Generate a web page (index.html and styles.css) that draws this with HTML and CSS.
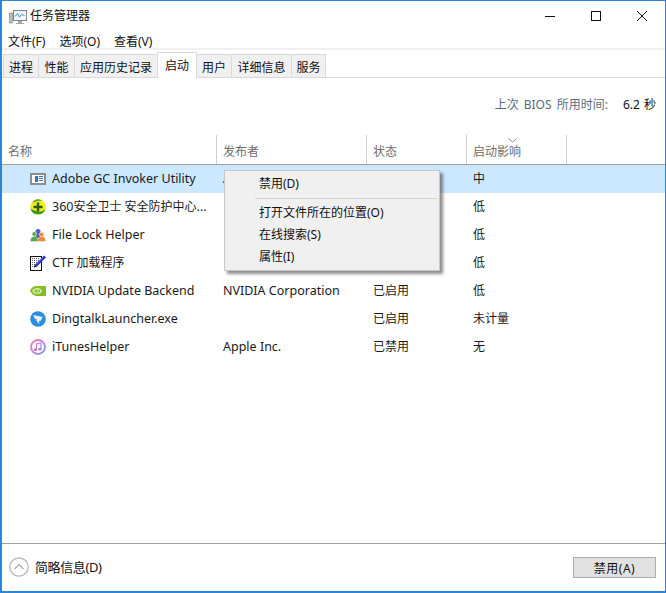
FILE: index.html
```html
<!DOCTYPE html>
<html lang="zh-CN">
<head>
<meta charset="utf-8">
<title>任务管理器</title>
<link rel="stylesheet" href="styles.css">
</head>
<body>
<div class="window">
  <header class="titlebar">
    <svg class="app-icon" width="18" height="16" viewBox="0 0 18 16">
      <rect x="0.5" y="4" width="3" height="10" fill="#b9bdbf" stroke="#7d8386" stroke-width=".6"/>
      <rect x="4.5" y="1.5" width="13" height="10" fill="#eef5fa" stroke="#7d8386"/>
      <path d="M6 7.500l2.500-3 2 3.500 2-2.500 3 1" fill="none" stroke="#3c8fc4"/>
      <path d="M9 12h4v2h2v1H7v-1h2z" fill="#a2a7aa"/>
    </svg>
    <span class="title">任务管理器</span>
    <div class="controls">
      <svg width="12" height="12" viewBox="0 0 12 12" class="ctl-min"><path d="M1 6.500h10" stroke="#111" fill="none"/></svg>
      <svg width="12" height="12" viewBox="0 0 12 12" class="ctl-max"><rect x="1.500" y="1.500" width="9" height="9" fill="none" stroke="#111"/></svg>
      <svg width="12" height="12" viewBox="0 0 12 12" class="ctl-close"><path d="M1 1l10 10M11 1L1 11" stroke="#111" fill="none"/></svg>
    </div>
  </header>
  <nav class="menubar">
    <span>文件(F)</span><span>选项(O)</span><span>查看(V)</span>
  </nav>
  <div class="tabs">
    <span class="tab t1">进程</span><span class="tab t2">性能</span><span class="tab t3">应用历史记录</span><span class="tab active">启动</span><span class="tab t5">用户</span><span class="tab t6">详细信息</span><span class="tab t7">服务</span>
  </div>
  <main class="content">
    <div class="bios"><span class="bios-label">上次 BIOS 所用时间:</span><span class="bios-value">6.2 秒</span></div>
    <div class="thead">
      <div class="th col-name">名称</div>
      <div class="th col-pub">发布者</div>
      <div class="th col-state">状态</div>
      <div class="th col-impact"><svg class="sort" width="9" height="5" viewBox="0 0 9 5"><path d="M.5.5l4 3.500 4-3.500" fill="none" stroke="#8a8a8a"/></svg>启动影响</div>
      <div class="th col-rest"></div>
    </div>
    <div class="rows">
      <div class="row selected">
        <div class="cell col-name">
          <svg class="ico" width="16" height="16" viewBox="0 0 16 16"><rect x="1" y="3" width="14" height="10" fill="#fff" stroke="#8d8d8d" stroke-width="2"/><rect x="5" y="5" width="3" height="6" fill="#2f79c8"/><path d="M9 5.500h4M9 7.500h4M9 9.500h4" stroke="#3f74b0"/></svg>
          <span>Adobe GC Invoker Utility</span>
        </div>
        <div class="cell col-pub">A</div>
        <div class="cell col-state"></div>
        <div class="cell col-impact">中</div>
      </div>
      <div class="row">
        <div class="cell col-name">
          <svg class="ico" width="16" height="16" viewBox="0 0 16 16"><circle cx="8" cy="8" r="7.800" fill="#f5ea1c"/><path d="M.6 9.500a7.600 7.600 0 0 0 14.800 0c-2 3-5 3.500-7.400 3S2.500 11 .6 9.500z" fill="#2f9a1e"/><path d="M3 2.500A7.500 7.500 0 0 1 12.500 2C9 1.500 6 2 3 3.800z" fill="#3ea52a"/><path d="M6.800 3.500h2.400v3.300h3.300v2.400H9.200v3.300H6.800V9.200H3.500V6.800h3.300z" fill="#245c14"/></svg>
          <span>360<span class="cjk">安全卫士 安全防护中心</span>...</span>
        </div>
        <div class="cell col-pub"></div>
        <div class="cell col-state"></div>
        <div class="cell col-impact">低</div>
      </div>
      <div class="row">
        <div class="cell col-name">
          <svg class="ico" width="16" height="16" viewBox="0 0 16 16"><circle cx="8" cy="4.500" r="2.500" fill="#4a62b8"/><path d="M5 11c0-3 1.500-4.500 3-4.500s3 1.500 3 4.500z" fill="#4a62b8"/><circle cx="4.300" cy="7" r="2.300" fill="#5aa552" stroke="#fff" stroke-width=".5"/><path d="M.3 14.500c0-3.800 2-5 4-5s4 1.200 4 5z" fill="#5aa552" stroke="#fff" stroke-width=".4"/><circle cx="11.700" cy="7.500" r="2.300" fill="#ea8a3a" stroke="#fff" stroke-width=".5"/><path d="M7.700 14.500c0-3.800 2-5 4-5s4 1.200 4 5z" fill="#ea8a3a" stroke="#fff" stroke-width=".4"/></svg>
          <span>File Lock Helper</span>
        </div>
        <div class="cell col-pub"></div>
        <div class="cell col-state"></div>
        <div class="cell col-impact">低</div>
      </div>
      <div class="row">
        <div class="cell col-name">
          <svg class="ico" width="16" height="16" viewBox="0 0 16 16"><rect x=".5" y="1.500" width="11" height="14" fill="#fff" stroke="#111"/><path d="M2 3.500h8M2 5.500h8M2 7.500h6M2 9.500h4M2 11.500h3" stroke="#666" stroke-dasharray="1 1"/><path d="M4 12.500l1-3L14 .5l2 2-9 9z" fill="#2437c9"/><path d="M6 9.500l7-7" stroke="#8fa0f0" stroke-width=".7"/><path d="M4 12.500l.8-2.400 1.600 1.600z" fill="#111"/></svg>
          <span>CTF <span class="cjk">加载程序</span></span>
        </div>
        <div class="cell col-pub"></div>
        <div class="cell col-state"></div>
        <div class="cell col-impact">低</div>
      </div>
      <div class="row">
        <div class="cell col-name">
          <svg class="ico" width="16" height="16" viewBox="0 0 16 16"><path d="M5.500 3C2.500 3.500.8 5.500 0 8c1.500 2.500 3.500 4.500 6 5h10V3z" fill="#86bd22"/><path d="M2 8C3.500 5.500 6 4.800 8 5c2.500.2 4 2 4 3s-2 3-4.500 3C5 11 3.200 9.800 2 8z" fill="#d8ecb0"/><path d="M4 8C5 6.500 6.500 6.200 8 6.500 9.500 6.800 10.300 7.500 10.300 8S9 9.800 7.500 9.800C6 9.800 5 9.200 4 8z" fill="#86bd22"/><circle cx="7.500" cy="8" r=".9" fill="#d8ecb0"/></svg>
          <span>NVIDIA Update Backend</span>
        </div>
        <div class="cell col-pub">NVIDIA Corporation</div>
        <div class="cell col-state">已启用</div>
        <div class="cell col-impact">低</div>
      </div>
      <div class="row">
        <div class="cell col-name">
          <svg class="ico" width="16" height="16" viewBox="0 0 16 16"><circle cx="8" cy="8" r="7.800" fill="#2b8fe0"/><path d="M3.500 4l9 2-1.500 3.500-2 .7.300 3-2.300-3-1-.7 1.500-.4-3-1.600-.5-1.500z" fill="#e8f3fc"/></svg>
          <span>DingtalkLauncher.exe</span>
        </div>
        <div class="cell col-pub"></div>
        <div class="cell col-state">已启用</div>
        <div class="cell col-impact">未计量</div>
      </div>
      <div class="row">
        <div class="cell col-name">
          <svg class="ico" width="16" height="16" viewBox="0 0 16 16"><defs><linearGradient id="itunes" x1="0" y1="0" x2="1" y2="1"><stop offset="0" stop-color="#f47ca0"/><stop offset=".5" stop-color="#c17de0"/><stop offset="1" stop-color="#6f9cf0"/></linearGradient></defs><circle cx="8" cy="8" r="7" fill="#fff" stroke="url(#itunes)" stroke-width="1.800"/><path d="M6.500 10.500V5l4.500-1v6" fill="none" stroke="url(#itunes)" stroke-width="1.200"/><ellipse cx="5.400" cy="10.800" rx="1.500" ry="1.200" fill="#c55fc0"/><ellipse cx="9.900" cy="10.300" rx="1.500" ry="1.200" fill="#a16fe0"/></svg>
          <span>iTunesHelper</span>
        </div>
        <div class="cell col-pub">Apple Inc.</div>
        <div class="cell col-state">已禁用</div>
        <div class="cell col-impact">无</div>
      </div>
    </div>
    <div class="menu">
      <div class="menu-item">禁用(D)</div>
      <div class="menu-sep"></div>
      <div class="menu-item">打开文件所在的位置(O)</div>
      <div class="menu-item">在线搜索(S)</div>
      <div class="menu-item">属性(I)</div>
    </div>
  </main>
  <footer class="footer">
    <div class="less">
      <svg width="20" height="20" viewBox="0 0 20 20"><circle cx="10" cy="10" r="9.200" fill="#fff" stroke="#b4b4b4" stroke-width="1.200"/><path d="M5.500 12L10 7.500l4.500 4.500" fill="none" stroke="#a8a8a8" stroke-width="1.200"/></svg>
      <span class="less-label">简略信息(D)</span>
    </div>
    <button class="btn">禁用(A)</button>
  </footer>
</div>
</body>
</html>
```

FILE: styles.css
```css
* { box-sizing: border-box; }
html, body { margin: 0; padding: 0; height: 100%; }
body {
  font-family: "Noto Sans", "Noto Sans CJK SC", sans-serif;
  font-size: 12px;
  color: #1a1a1a;
  background: #fff;
  overflow: hidden;
}
.window {
  width: 666px;
  height: 593px;
  display: flex;
  flex-direction: column;
  background: #fff;
  border: 1px solid #2a86d8;
  border-left-width: 2px;
  border-bottom-width: 2px;
  position: relative;
}
.titlebar {
  height: 29px;
  display: flex;
  align-items: center;
  padding-left: 7px;
  flex: none;
}
.app-icon { margin-right: 3px; margin-top: 2px; }
.title { font-size: 12px; color: #111; margin-bottom: 2px; }
.controls {
  margin-left: auto;
  display: flex;
  align-items: center;
}
.controls svg { display: block; }
.ctl-min { margin-right: 34px; }
.ctl-max { margin-right: 34px; }
.ctl-close { margin-right: 17px; }
.menubar {
  height: 20px;
  flex: none;
  display: flex;
  gap: 14px;
  padding-left: 6px;
  align-items: center;
  font-size: 12px;
  color: #111;
  border-bottom: 2px solid #f0f0f0;
  padding-top: 3px;
}
.tabs {
  height: 28px;
  flex: none;
  display: flex;
  align-items: flex-end;
  padding-left: 1px;
  border-bottom: 1px solid #d9d9d9;
  position: relative;
}
.tab {
  height: 23px;
  padding-top: 1px;
  display: flex;
  align-items: center;
  justify-content: center;
  background: #f0f0f0;
  border: 1px solid #d9d9d9;
  border-bottom: 0;
  border-left: 0;
  font-size: 12px;
  color: #111;
}
.t1 { width: 36px; border-left: 1px solid #d9d9d9; }
.t2 { width: 36px; }
.t3 { width: 83px; }
.t5 { width: 35px; }
.t6 { width: 60px; }
.t7 { width: 34px; }
.tab.active {
  width: 40px;
  height: 26px;
  background: #fff;
  border-left: 1px solid #d9d9d9;
  padding-top: 0;
  padding-bottom: 2px;
  margin-left: -1px;
  margin-bottom: -1px;
}
.content {
  flex: 1;
  position: relative;
  display: flex;
  flex-direction: column;
  min-height: 0;
}
.bios {
  height: 57px;
  flex: none;
  display: flex;
  justify-content: flex-end;
  align-items: center;
  padding-right: 9px;
  padding-bottom: 5px;
  font-size: 12px;
}
.bios-label { color: #5c6b80; margin-right: 15px; word-spacing: 2px; }
.bios-value { color: #111; word-spacing: 1px; }
.thead {
  height: 30px;
  flex: none;
  display: flex;
  border-bottom: 1px solid #a0a0a0;
}
.th {
  color: #6d6d6d;
  font-size: 12px;
  padding-left: 6px;
  padding-top: 7px;
  border-right: 1px solid #d0d0d0;
  position: relative;
}
.th.col-rest { border-right: 0; }
.sort { position: absolute; left: 41px; top: 3px; }
.col-name { width: 215px; }
.col-pub { width: 150px; }
.col-state { width: 100px; }
.col-impact { width: 100px; }
.col-rest { flex: 1; }
.rows { flex: none; }
.row {
  height: 28px;
  display: flex;
  align-items: center;
  padding-bottom: 2px;
}
.row.selected { background: #cce8ff; }
.cell {
  padding-left: 6px;
  font-size: 12.500px;
  color: #1a1a1a;
  white-space: nowrap;
  overflow: hidden;
  min-height: 18px;
}
.cell.col-pub { padding-top: 1px; }
.cell.col-state, .cell.col-impact { font-size: 12px; }
.cell.col-name {
  display: flex;
  align-items: center;
  padding-left: 28px;
  gap: 6px;
  overflow: visible;
}
.cjk { font-size: 12px; }
.ico { flex: none; margin-top: 2px; }
.menu {
  position: absolute;
  left: 222px;
  top: 92px;
  width: 216px;
  height: 101px;
  background: #f0f0f0;
  border: 1px solid #c8c8c8;
  box-shadow: 3px 3px 3px rgba(0,0,0,.45);
  padding-top: 2px;
  z-index: 5;
}
.menu-item {
  height: 22px;
  line-height: 22px;
  padding-left: 34px;
  font-size: 12px;
  color: #111;
}
.menu-sep {
  height: 1px;
  background: #d4d4d4;
  margin: 3px 2px 3px 30px;
}
.footer {
  height: 48px;
  flex: none;
  border-top: 1px solid #a0a0a0;
  display: flex;
  align-items: center;
  justify-content: space-between;
  padding: 0 9px 0 7px;
}
.less {
  display: flex;
  align-items: center;
  gap: 6px;
  font-size: 13px;
  color: #111;
  margin-bottom: 2px;
}
.less-label { letter-spacing: -.4px; }
.btn {
  width: 83px;
  height: 21px;
  background: #e1e1e1;
  border: 1px solid #adadad;
  font: inherit;
  letter-spacing: .5px;
  color: #111;
  padding: 0;
}
```
